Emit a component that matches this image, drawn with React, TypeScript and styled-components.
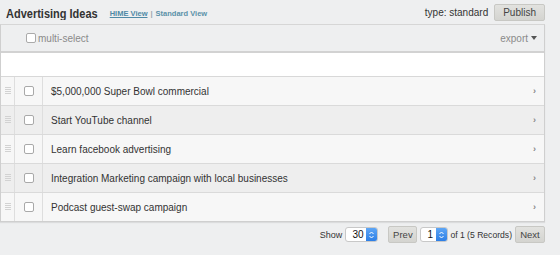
import React from "react";
import styled, { createGlobalStyle } from "styled-components";

const Global = createGlobalStyle`
  html, body { margin: 0; padding: 0; background: #eeeff0; }
  body { font-family: "Liberation Sans", Arial, sans-serif; width: 560px; height: 255px; overflow: hidden; }
`;

const Page = styled.div`
  width: 560px;
  height: 255px;
  background: #eeeff0;
`;

const Header = styled.div`
  display: flex;
  align-items: center;
  height: 24px;
  padding: 0 0 0 6px;
  box-sizing: border-box;
  width: 545px;
`;

const Title = styled.h1`
  margin: 0;
  font-size: 11px;
  font-weight: bold;
  color: #333;
  padding-top: 2px;
  transform: scaleY(1.1);
`;

const Views = styled.div`
  margin-left: 12px;
  font-size: 7.5px;
  font-weight: bold;
  color: #9aa7ad;
  display: flex;
  gap: 3px;
  padding-top: 3px;
`;

const ViewLink = styled.span<{ $active?: boolean }>`
  color: ${(p) => (p.$active ? "#4f8aa6" : "#5a91a8")};
  text-decoration: ${(p) => (p.$active ? "underline" : "none")};
`;

const HeaderRight = styled.div`
  margin-left: auto;
  display: flex;
  align-items: center;
  gap: 6px;
  font-size: 10px;
  color: #333;
`;

const GrayButton = styled.button<{ $w?: number }>`
  font-family: "Liberation Sans", Arial, sans-serif;
  font-size: 10px;
  color: #444;
  background: linear-gradient(#e2e2df, #d4d4d0);
  border: 1px solid #c8c8c4;
  border-radius: 2px;
  height: 17px;
  padding: 0 8px;
  margin: 0;
  box-sizing: border-box;
  line-height: 15px;
  ${(p) => (p.$w ? `width: ${p.$w}px; padding: 0;` : "")}
`;

const Panel = styled.div`
  width: 545px;
  box-sizing: border-box;
  border: 1px solid #cfcfcf;
  border-top: 1px solid #d6d6d6;
  background: #fff;
  box-shadow: 0 1px 1px rgba(0,0,0,0.08);
`;

const Toolbar = styled.div`
  display: flex;
  align-items: center;
  height: 26px;
  background: #eeeff0;
  border-bottom: 2px solid #d2d2d2;
  padding: 0 7px 0 25px;
  font-size: 10px;
  color: #8a8a8a;
`;

const SmallCheck = styled.span`
  width: 10px;
  height: 10px;
  border: 1px solid #aaa;
  border-radius: 2px;
  background: #fff;
  display: inline-block;
  margin-right: 2px;
  box-sizing: border-box;
`;

const Export = styled.span`
  margin-left: auto;
  display: flex;
  align-items: center;
  gap: 3px;
`;

const Blank = styled.div`
  height: 23px;
  background: #fff;
  border-bottom: 1px solid #d8d8d8;
`;

const Row = styled.div<{ $alt: boolean }>`
  display: grid;
  grid-template-columns: 14px 28px 1fr 20px;
  height: 28px;
  background: ${(p) => (p.$alt ? "#eeeeee" : "#f7f7f7")};
  border-bottom: 1px solid #dadada;
  &:last-child { border-bottom: none; }
`;

const Cell = styled.div<{ $border?: boolean }>`
  display: flex;
  align-items: center;
  justify-content: center;
  border-right: ${(p) => (p.$border ? "1px solid #dedede" : "none")};
`;

const TextCell = styled.div`
  display: flex;
  align-items: center;
  padding-left: 8px;
  font-size: 10px;
  color: #333;
`;

const Handle = styled.span`
  width: 6px;
  height: 8px;
  background: repeating-linear-gradient(#d2d2d2 0 1px, transparent 1px 2px);
`;

const RowCheck = styled.span`
  width: 10px;
  height: 10px;
  border: 1px solid #a9a9a9;
  border-radius: 2px;
  background: #fff;
  box-sizing: border-box;
`;

const Chevron = styled.span`
  font-size: 9px;
  color: #888;
  font-weight: bold;
  display: flex;
  align-items: center;
  justify-content: flex-end;
  padding-right: 8px;
`;

const Footer = styled.div`
  width: 545px;
  display: flex;
  justify-content: flex-end;
  align-items: center;
  margin-top: 4px;
  font-size: 9px;
  color: #333;
`;

const Records = styled.span`
  font-size: 8.6px;
`;

const Select = styled.span<{ $w: number }>`
  display: inline-flex;
  align-items: stretch;
  width: ${(p) => p.$w}px;
  height: 15px;
  border: 1px solid #c8c8c8;
  border-radius: 3px;
  background: #fff;
  box-sizing: border-box;
  overflow: hidden;
  font-size: 10px;
  color: #111;
`;

const SelectValue = styled.span`
  flex: 1;
  padding-left: 6px;
  line-height: 13px;
`;

const SelectArrow = styled.span`
  width: 11px;
  background: linear-gradient(#5ea6f5, #2d7fe6);
  display: flex;
  align-items: center;
  justify-content: center;
`;

const FooterBtn = styled(GrayButton)`
  height: 17px;
  font-size: 9.5px;
`;

const Gap = styled.span<{ $w: number }>`
  width: ${(p) => p.$w}px;
  flex: none;
`;

const Arrows = () => (
  <svg width="7" height="10" viewBox="0 0 7 10">
    <path d="M1.5 4 L3.5 2 L5.5 4 M1.5 6 L3.5 8 L5.5 6" stroke="#fff" strokeWidth="1" fill="none" />
  </svg>
);

const items = [
  "$5,000,000 Super Bowl commercial",
  "Start YouTube channel",
  "Learn facebook advertising",
  "Integration Marketing campaign with local businesses",
  "Podcast guest-swap campaign",
];

export default function App() {
  return (
    <Page>
      <Global />
      <Header>
        <Title>Advertising Ideas</Title>
        <Views>
          <ViewLink $active>HIME View</ViewLink>
          <span>|</span>
          <ViewLink>Standard View</ViewLink>
        </Views>
        <HeaderRight>
          <span>type: standard</span>
          <GrayButton>Publish</GrayButton>
        </HeaderRight>
      </Header>
      <Panel>
        <Toolbar>
          <SmallCheck />
          <span>multi-select</span>
          <Export>
            export
            <svg width="6" height="4" viewBox="0 0 6 4"><path d="M0 0 H6 L3 4 Z" fill="#555" /></svg>
          </Export>
        </Toolbar>
        <Blank />
        {items.map((t, i) => (
          <Row key={t} $alt={i % 2 === 1}>
            <Cell $border><Handle /></Cell>
            <Cell $border><RowCheck /></Cell>
            <TextCell>{t}</TextCell>
            <Chevron>›</Chevron>
          </Row>
        ))}
      </Panel>
      <Footer>
        <span>Show</span>
        <Gap $w={3} />
        <Select $w={33}>
          <SelectValue>30</SelectValue>
          <SelectArrow><Arrows /></SelectArrow>
        </Select>
        <Gap $w={10} />
        <FooterBtn $w={29}>Prev</FooterBtn>
        <Gap $w={3} />
        <Select $w={28}>
          <SelectValue>1</SelectValue>
          <SelectArrow><Arrows /></SelectArrow>
        </Select>
        <Gap $w={2} />
        <Records>of 1 (5 Records)</Records>
        <Gap $w={3} />
        <FooterBtn $w={30}>Next</FooterBtn>
      </Footer>
    </Page>
  );
}
